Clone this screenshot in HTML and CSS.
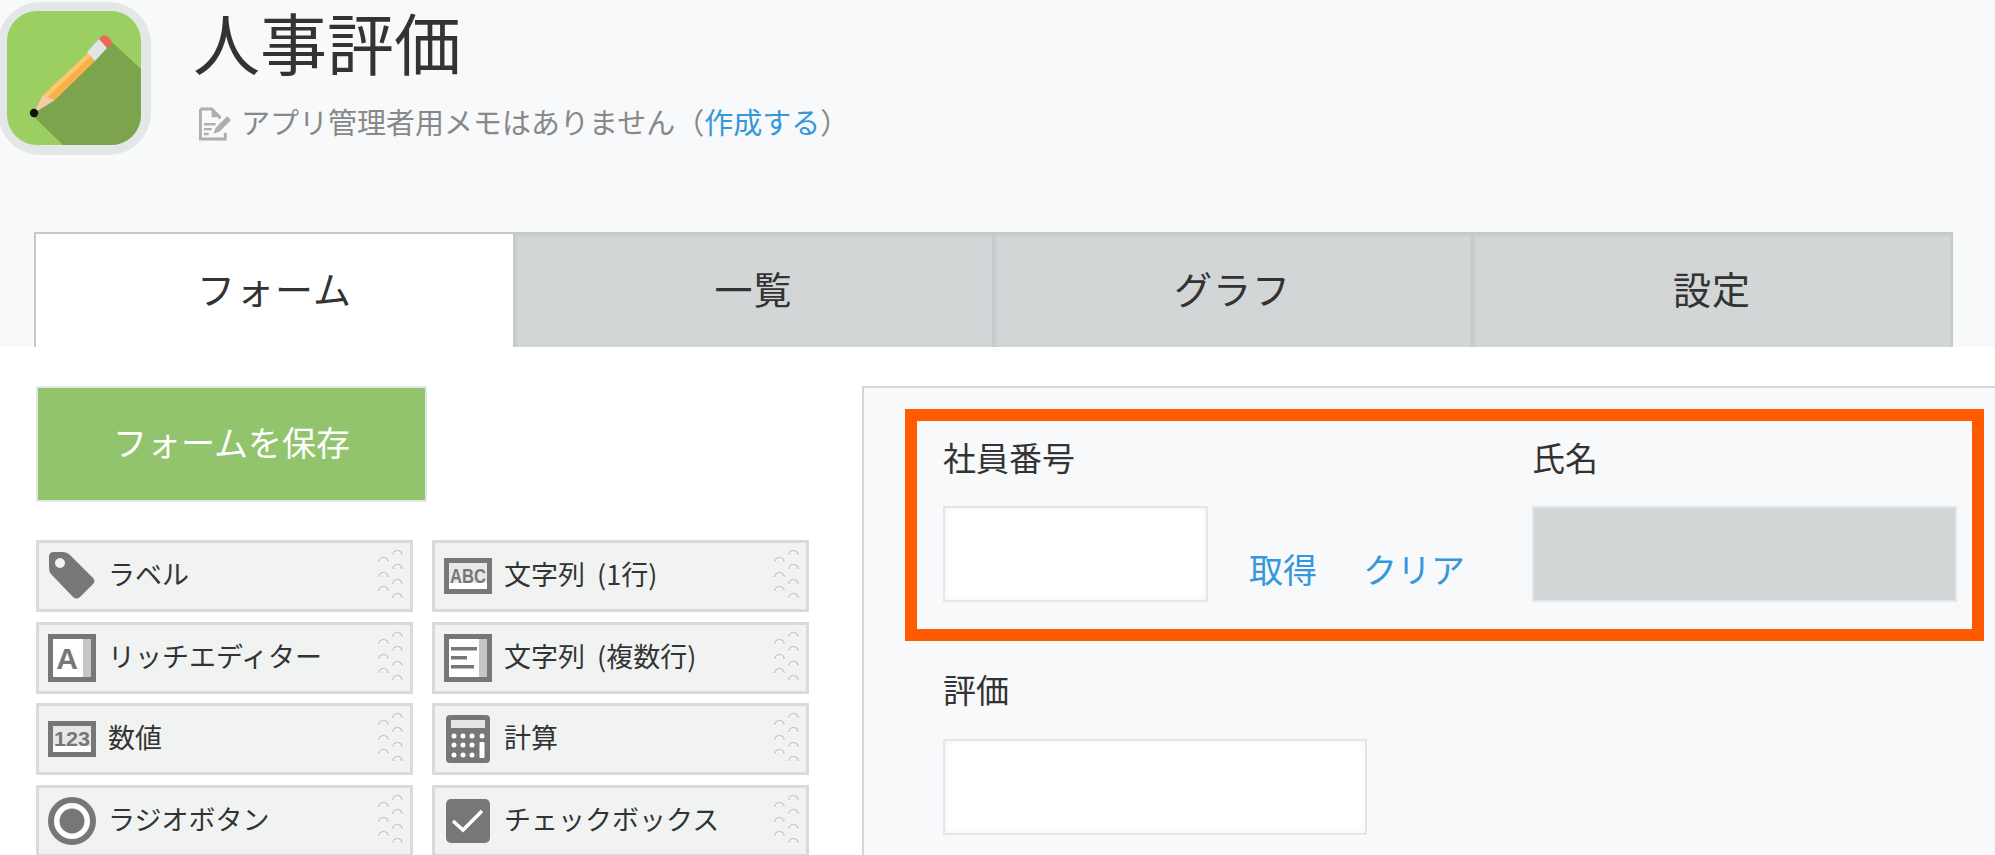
FILE: index.html
```html
<!DOCTYPE html>
<html lang="ja">
<head>
<meta charset="utf-8">
<title>人事評価</title>
<link rel="stylesheet" href="styles.css">
</head>
<body>
<svg class="defs" aria-hidden="true">
  <symbol id="grip" viewBox="0 0 26 54">
    <g fill="none" stroke="#fff" stroke-width="1.500">
      <path d="M2 14a4.500 4.500 0 0 1 9 0M2 29a4.500 4.500 0 0 1 9 0M2 43a4.500 4.500 0 0 1 9 0M16 7a4.500 4.500 0 0 1 9 0M16 21a4.500 4.500 0 0 1 9 0M16 36a4.500 4.500 0 0 1 9 0M16 50a4.500 4.500 0 0 1 9 0"/>
    </g>
    <g fill="none" stroke="#c9cbcb" stroke-width="1.600">
      <path d="M2 13a4.500 4.500 0 0 1 9 0M2 28a4.500 4.500 0 0 1 9 0M2 42a4.500 4.500 0 0 1 9 0M16 6a4.500 4.500 0 0 1 9 0M16 20a4.500 4.500 0 0 1 9 0M16 35a4.500 4.500 0 0 1 9 0M16 49a4.500 4.500 0 0 1 9 0"/>
    </g>
  </symbol>
</svg>

<header class="app-head">
  <svg class="app-icon" viewBox="0 0 153 153">
    <defs><clipPath id="tile"><rect x="9" y="9" width="134" height="134" rx="30"/></clipPath></defs>
    <rect x="0" y="0" width="153" height="153" rx="42" fill="#e4e7e8"/>
    <g clip-path="url(#tile)">
      <rect x="9" y="9" width="134" height="134" fill="#9ccf61"/>
      <path d="M34 113L114 40L143 67V143H65Z" fill="#7ba44d"/>
    </g>
    <path d="M36 111L45 93L57 98Z" fill="#f8cba6"/>
    <path d="M45 93L90 51L97 59L57 98Z" fill="#f7b04a"/>
    <path d="M45 93L90 51L93 54L49 96Z" fill="#fbc86b"/>
    <path d="M89 50L101 37L109 46L97 59Z" fill="#e2e5e8"/>
    <path d="M101 37L104 34Q107 32 110 35L113 38Q115 41 113 43L109 46Z" fill="#ee6a58"/>
    <circle cx="36" cy="111" r="4.200" fill="#111"/>
  </svg>
  <div class="app-info">
    <h1 class="app-title">人事評価</h1>
    <p class="app-memo">
      <svg class="memo-icon" viewBox="0 0 34 34">
        <path d="M1.500 1.500H13l8 8v2M1.500 1.500V32.500H27V26" fill="none" stroke="#adaeae" stroke-width="3"/>
        <path d="M13 2v8h8z" fill="#adaeae"/>
        <path d="M5 16h12v2.500H5zM5 21h8v2.500H5zM5 26h5v2.500H5z" fill="#adaeae"/>
        <path d="M15 27l2-6L29 9l4 4L21 25z" fill="#adaeae"/>
      </svg>
      <span class="memo-text">アプリ管理者用メモはありません（<a class="link" href="#">作成する</a>）</span>
    </p>
  </div>
</header>

<nav class="tabs">
  <a class="tab tab-active" href="#">フォーム</a>
  <a class="tab" href="#">一覧</a>
  <a class="tab" href="#">グラフ</a>
  <a class="tab" href="#">設定</a>
</nav>

<main class="workspace">
  <aside class="palette">
    <button class="save-btn" type="button">フォームを保存</button>
    <ul class="parts">
      <li class="part">
        <svg class="part-icon" viewBox="0 0 48 48"><path fill-rule="evenodd" d="M1 5Q1 0 6 0H15Q19 0 22 3L45 26Q48 29 45 32L32 45Q28 48 25 45L3 22Q1 20 1 16ZM12 6a5 5 0 1 0 .01 0Z" fill="#777"/></svg>
        <span class="part-name">ラベル</span>
        <svg class="grip"><use href="#grip"/></svg>
      </li>
      <li class="part">
        <svg class="part-icon part-icon-abc" viewBox="0 0 48 36"><rect x="2.500" y="2.500" width="43" height="31" fill="#fff" stroke="#777" stroke-width="5"/><rect x="5" y="5" width="38" height="20" fill="#e8e8e8"/><text class="icon-text" x="24" y="25" text-anchor="middle" textLength="36" lengthAdjust="spacingAndGlyphs" font-size="21">ABC</text></svg>
        <span class="part-name">文字列 (1行)</span>
        <svg class="grip"><use href="#grip"/></svg>
      </li>
      <li class="part">
        <svg class="part-icon" viewBox="0 0 48 48"><rect x="2.500" y="2.500" width="43" height="43" fill="#fff" stroke="#777" stroke-width="5"/><rect x="35" y="5" width="8" height="38" fill="#c6c6c6"/><text class="icon-text icon-text-bold" x="19" y="35" text-anchor="middle" font-size="30">A</text></svg>
        <span class="part-name">リッチエディター</span>
        <svg class="grip"><use href="#grip"/></svg>
      </li>
      <li class="part">
        <svg class="part-icon" viewBox="0 0 48 48"><rect x="2.500" y="2.500" width="43" height="43" fill="#fff" stroke="#777" stroke-width="5"/><rect x="35" y="5" width="8" height="38" fill="#c6c6c6"/><path d="M7 13h26v3.500H7zM7 22h16v3.500H7zM7 31h23v3.500H7z" fill="#777"/></svg>
        <span class="part-name">文字列 (複数行)</span>
        <svg class="grip"><use href="#grip"/></svg>
      </li>
      <li class="part">
        <svg class="part-icon part-icon-abc" viewBox="0 0 48 36"><rect x="2.500" y="2.500" width="43" height="31" fill="#fff" stroke="#777" stroke-width="5"/><rect x="5" y="5" width="38" height="20" fill="#e8e8e8"/><text class="icon-text" x="24" y="25" text-anchor="middle" textLength="36" lengthAdjust="spacingAndGlyphs" font-size="21">123</text></svg>
        <span class="part-name">数値</span>
        <svg class="grip"><use href="#grip"/></svg>
      </li>
      <li class="part">
        <svg class="part-icon" viewBox="0 0 48 48"><rect x="2" y="0" width="44" height="48" rx="4" fill="#777"/><rect x="7" y="5" width="34" height="8" fill="#e4e4e4"/><g fill="#fff"><circle cx="10" cy="21" r="2.500"/><circle cx="19" cy="21" r="2.500"/><circle cx="28" cy="21" r="2.500"/><circle cx="38" cy="21" r="2.500"/><circle cx="10" cy="30" r="2.500"/><circle cx="19" cy="30" r="2.500"/><circle cx="28" cy="30" r="2.500"/><circle cx="10" cy="40" r="2.500"/><circle cx="19" cy="40" r="2.500"/><circle cx="28" cy="40" r="2.500"/><rect x="35.500" y="27" width="5" height="16" rx="1"/></g></svg>
        <span class="part-name">計算</span>
        <svg class="grip"><use href="#grip"/></svg>
      </li>
      <li class="part">
        <svg class="part-icon" viewBox="0 0 48 48"><circle cx="24" cy="24" r="21" fill="#fff" stroke="#777" stroke-width="6"/><circle cx="24" cy="24" r="12.500" fill="#777"/></svg>
        <span class="part-name">ラジオボタン</span>
        <svg class="grip"><use href="#grip"/></svg>
      </li>
      <li class="part">
        <svg class="part-icon" viewBox="0 0 48 48"><rect x="2" y="2" width="44" height="44" rx="5" fill="#777"/><path d="M9 24l10 9L38 14" fill="none" stroke="#fff" stroke-width="3.500"/></svg>
        <span class="part-name">チェックボックス</span>
        <svg class="grip"><use href="#grip"/></svg>
      </li>
    </ul>
  </aside>

  <section class="form-canvas">
    <div class="field-row-highlight">
      <div class="field-group">
        <div class="field-label">社員番号</div>
        <div class="lookup">
          <div class="input input-id"></div>
          <a class="link lookup-link" href="#">取得</a>
          <a class="link lookup-link" href="#">クリア</a>
        </div>
      </div>
      <div class="field-group">
        <div class="field-label">氏名</div>
        <div class="input input-disabled"></div>
      </div>
    </div>
    <div class="field-plain">
      <div class="field-label">評価</div>
      <div class="input input-wide"></div>
    </div>
  </section>
</main>
</body>
</html>
```

FILE: styles.css
```css
* { box-sizing: border-box; }

html, body {
  margin: 0;
  height: 855px;
  overflow: hidden;
}

body {
  display: flex;
  flex-direction: column;
  background: #f8f9fb;
  color: #333;
  font-family: "Noto Sans CJK JP", "Noto Sans", sans-serif;
}

.defs { display: none; }

a { text-decoration: none; color: inherit; }

.link { color: #3498db; }

/* Header */
.app-head {
  display: flex;
  height: 232px;
  padding-top: 2px;
}

.app-icon {
  flex: none;
  width: 153px;
  height: 153px;
  margin-left: -2px;
}

.app-info {
  margin-left: 42px;
}

.app-title {
  margin: 0;
  font-size: 67px;
  font-weight: 400;
  line-height: 78px;
}

.app-memo {
  display: flex;
  align-items: flex-start;
  gap: 9px;
  margin: 22px 0 0 6px;
  font-size: 29px;
  line-height: 38px;
  color: #888;
}

.memo-icon {
  flex: none;
  width: 33px;
  height: 34px;
  margin-top: 5px;
}

/* Tabs */
.tabs {
  display: flex;
  height: 115px;
  margin-left: 34px;
  position: relative;
}

.tab {
  flex: 0 0 479px;
  display: flex;
  align-items: center;
  justify-content: center;
  padding-bottom: 6px;
  font-size: 38px;
  letter-spacing: 1px;
  border-top: 2px solid #c6c9ca;
  border-left: 2px solid #c6c9ca;
  background: #d3d6d7;
  box-shadow: inset 3px 0 3px -1px #c9cccd, inset 0 3px 3px -1px #c9cccd;
}

.tab:last-child {
  flex-basis: 482px;
  border-right: 2px solid #c6c9ca;
}

.tab-active {
  background: #fff;
  box-shadow: none;
}

/* Workspace */
.workspace {
  flex: 1;
  display: flex;
  min-height: 0;
  padding: 39px 0 0 36px;
  background: #fff;
}

.palette {
  flex: none;
  width: 826px;
}

.save-btn {
  display: block;
  width: 391px;
  height: 116px;
  padding: 0 0 4px;
  font: inherit;
  font-size: 34px;
  line-height: 48px;
  color: #fff;
  background: #92c46e;
  border: 2px solid #e3e7e7;
}

.parts {
  display: grid;
  grid-template-columns: 377px 377px;
  column-gap: 19px;
  row-gap: 9.5px;
  margin: 38px 0 0;
  padding: 0;
  list-style: none;
}

.part {
  display: flex;
  align-items: center;
  height: 72px;
  padding: 0 7px 0 9px;
  background: #f1f3f3;
  border: 3px solid #d9dbdb;
}

.part-icon {
  flex: none;
  width: 48px;
  height: 48px;
}

.part-icon-abc {
  height: 36px;
}

.icon-text {
  font-family: "Liberation Sans", sans-serif;
  font-weight: 700;
  fill: #777;
}

.icon-text-bold {
  fill: #777;
}

.part-name {
  flex: 1;
  margin-left: 12px;
  padding-bottom: 4px;
  font-size: 27px;
  line-height: 36px;
  word-spacing: 6px;
  white-space: nowrap;
}

.grip {
  flex: none;
  width: 26px;
  height: 54px;
}

/* Form canvas */
.form-canvas {
  flex: 1;
  min-width: 0;
  padding: 21px 0 0 41px;
  background: #f8f9fb;
  border-top: 2px solid #d4d6d7;
  border-left: 2px solid #d4d6d7;
}

.field-row-highlight {
  display: flex;
  width: 1079px;
  height: 232px;
  padding: 15px 0 0 26px;
  border: 12px solid #ff5a00;
}

.field-group:first-child {
  width: 589px;
}

.field-label {
  height: 47px;
  margin-bottom: 23px;
  font-size: 33px;
  line-height: 42px;
  white-space: nowrap;
}

.lookup {
  display: flex;
  align-items: flex-end;
}

.input {
  height: 96px;
  background: #fff;
  border: 2px solid #e3e5e8;
  box-shadow: inset 0 0 6px #f2f2f2;
}

.input-id {
  flex: none;
  width: 265px;
}

.input-disabled {
  width: 425px;
  background: #d3d6d7;
  box-shadow: none;
}

.input-wide {
  width: 424px;
}

.lookup-link {
  margin-left: 41px;
  padding-bottom: 9px;
  font-size: 34px;
  line-height: 48px;
  white-space: nowrap;
}

.lookup-link + .lookup-link {
  margin-left: 46px;
}

.field-plain {
  padding: 27px 0 0 38px;
}

.field-plain .field-label {
  margin-bottom: 24px;
}
```
